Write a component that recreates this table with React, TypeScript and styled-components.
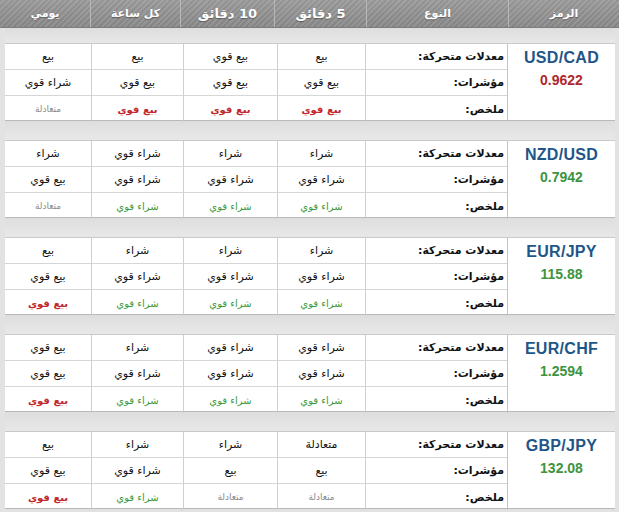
import React, { FC } from 'react'
import styled, { createGlobalStyle } from 'styled-components'

const GlobalStyle = createGlobalStyle`
  html, body {
    margin: 0;
    padding: 0;
    background: #ffffff;
  }
`

const COLUMNS_HEAD = '111px 142px 92px 94px 90px 1fr'
const COLUMNS_BODY = '108px 142px 88px 94px 92px 86px'

const Page = styled.div`
  width: 619px;
  height: 512px;
  overflow: hidden;
  direction: rtl;
  background: #e2e2e2;
  font-family: 'DejaVu Sans', sans-serif;
`

const Head = styled.div`
  display: grid;
  grid-template-columns: ${COLUMNS_HEAD};
  height: 28px;
  background:
    linear-gradient(180deg, rgba(255, 255, 255, 0.08), rgba(0, 0, 0, 0.06)),
    repeating-linear-gradient(135deg, #8c8c8c 0 2px, #9b9b9b 2px 4px);
  border-bottom: 1px solid #7c7c7c;
  box-sizing: border-box;
`

const HeadCell = styled.div`
  display: flex;
  align-items: center;
  justify-content: center;
  color: #ffffff;
  font-size: 11px;
  font-weight: bold;
  text-shadow: 0 1px 1px rgba(0, 0, 0, 0.35);
  border-left: 1px solid #b8b8b8;

  &:last-child {
    border-left: none;
  }

  &.big {
    font-size: 13px;
  }
`

const Body = styled.div`
  padding: 0 4px 0 5px;
`

const Band = styled.div<{ $first?: boolean }>`
  height: ${({ $first }) => ($first ? 15 : 19)}px;
  background: linear-gradient(180deg, #dedede, #e8e8e8);
`

const Group = styled.div`
  display: grid;
  grid-template-columns: ${COLUMNS_BODY};
  grid-template-rows: repeat(3, 26px);
  background: #ffffff;
  border-top: 1px solid #c9c9c9;
  border-bottom: 1px solid #b9b9b9;
  box-sizing: border-box;
  height: 78px;
`

const SymbolCell = styled.div`
  grid-row: span 3;
  display: flex;
  flex-direction: column;
  align-items: center;
  padding-top: 5px;
  gap: 5px;
  border-left: 1px solid #c4c4c4;
  direction: ltr;
  font-family: 'Liberation Sans', Arial, sans-serif;
  font-weight: bold;
`

const Pair = styled.div`
  color: #1f5688;
  font-size: 16px;
  letter-spacing: 0.3px;
`

const Price = styled.div<{ $up: boolean }>`
  color: ${({ $up }) => ($up ? '#3d9440' : '#b0282c')};
  font-size: 14px;
`

const Cell = styled.div<{ $last?: boolean; $bottom?: boolean }>`
  display: flex;
  align-items: center;
  justify-content: center;
  color: #111111;
  font-size: 11px;
  border-left: ${({ $last }) => ($last ? 'none' : '1px solid #cfcfcf')};
  border-bottom: ${({ $bottom }) => ($bottom ? 'none' : '1px solid #d6d6d6')};
  box-sizing: border-box;
  white-space: nowrap;

  &.label {
    justify-content: flex-start;
    padding-right: 3px;
    font-weight: bold;
  }

  &.sell {
    color: #c1272d;
    font-size: 10px;
    font-weight: bold;
  }

  &.buy {
    color: #3a9a3c;
    font-size: 10px;
  }

  &.neutral {
    color: #8a8a8a;
    font-size: 9px;
  }
`

type Row = [string, string, string, string]

interface Pair {
  symbol: string
  price: string
  up: boolean
  ma: Row
  ind: Row
  sum: Row
}

const pairs: Pair[] = [
  {
    symbol: 'USD/CAD',
    price: '0.9622',
    up: false,
    ma: ['بيع', 'بيع قوي', 'بيع', 'بيع'],
    ind: ['بيع قوي', 'بيع قوي', 'بيع قوي', 'شراء قوي'],
    sum: ['بيع قوي', 'بيع قوي', 'بيع قوي', 'متعادلة'],
  },
  {
    symbol: 'NZD/USD',
    price: '0.7942',
    up: true,
    ma: ['شراء', 'شراء', 'شراء قوي', 'شراء'],
    ind: ['شراء قوي', 'شراء قوي', 'شراء قوي', 'بيع قوي'],
    sum: ['شراء قوي', 'شراء قوي', 'شراء قوي', 'متعادلة'],
  },
  {
    symbol: 'EUR/JPY',
    price: '115.88',
    up: true,
    ma: ['شراء', 'شراء', 'شراء', 'بيع'],
    ind: ['شراء قوي', 'شراء قوي', 'شراء قوي', 'بيع قوي'],
    sum: ['شراء قوي', 'شراء قوي', 'شراء قوي', 'بيع قوي'],
  },
  {
    symbol: 'EUR/CHF',
    price: '1.2594',
    up: true,
    ma: ['شراء قوي', 'شراء قوي', 'شراء', 'بيع قوي'],
    ind: ['شراء قوي', 'شراء قوي', 'شراء قوي', 'بيع قوي'],
    sum: ['شراء قوي', 'شراء قوي', 'شراء قوي', 'بيع قوي'],
  },
  {
    symbol: 'GBP/JPY',
    price: '132.08',
    up: true,
    ma: ['متعادلة', 'شراء', 'شراء', 'بيع'],
    ind: ['بيع', 'بيع', 'شراء قوي', 'بيع قوي'],
    sum: ['متعادلة', 'متعادلة', 'شراء قوي', 'بيع قوي'],
  },
]

const summaryClass = (value: string) => {
  if (value.startsWith('بيع')) return 'sell'
  if (value.startsWith('شراء')) return 'buy'
  return 'neutral'
}

const labels = ['معدلات متحركة:', 'مؤشرات:', 'ملخص:']

const PairGroup: FC<{ pair: Pair }> = ({ pair }) => {
  const rows: Row[] = [pair.ma, pair.ind, pair.sum]

  return (
    <Group>
      <SymbolCell>
        <Pair>{pair.symbol}</Pair>
        <Price $up={pair.up}>{pair.price}</Price>
      </SymbolCell>
      {rows.map((row, r) => (
        <React.Fragment key={r}>
          <Cell className="label" $bottom={r === 2}>
            {labels[r]}
          </Cell>
          {row.map((value, c) => (
            <Cell key={c} $last={c === 3} $bottom={r === 2} className={r === 2 ? summaryClass(value) : undefined}>
              {value}
            </Cell>
          ))}
        </React.Fragment>
      ))}
    </Group>
  )
}

export default function App() {
  return (
    <>
      <GlobalStyle />
      <Page>
        <Head>
          <HeadCell>الرمز</HeadCell>
          <HeadCell>النوع</HeadCell>
          <HeadCell className="big">5 دقائق</HeadCell>
          <HeadCell className="big">10 دقائق</HeadCell>
          <HeadCell>كل ساعة</HeadCell>
          <HeadCell>يومي</HeadCell>
        </Head>
        <Body>
          {pairs.map((pair, i) => (
            <React.Fragment key={pair.symbol}>
              <Band $first={i === 0} />
              <PairGroup pair={pair} />
            </React.Fragment>
          ))}
        </Body>
      </Page>
    </>
  )
}
